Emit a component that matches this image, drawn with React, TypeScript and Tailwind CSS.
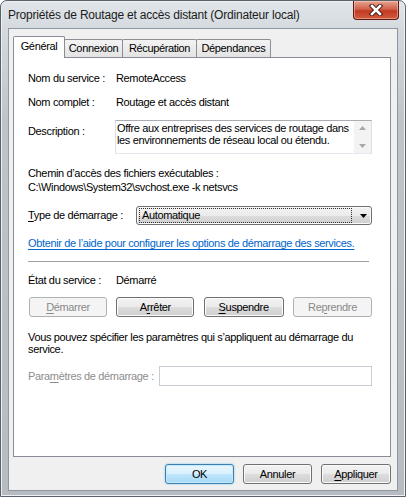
import React from 'react';

// Win7-style button faces
const faceOn =
  'border border-[#707070] rounded-[3px] bg-[linear-gradient(#f2f2f2_0%,#ebebeb_50%,#dddddd_50%,#cfcfcf_100%)] shadow-[inset_0_0_0_1px_#fbfbfb] text-black';
const faceOff = 'border border-[#adb2b5] rounded-[3px] bg-[#f4f4f4] text-[#8a8a8a]';
const faceDefault =
  'border border-[#3c7fb1] rounded-[3px] bg-[linear-gradient(#eaf6fd_0%,#d9f0fc_50%,#bee6fd_50%,#a7d9f5_100%)] shadow-[inset_0_0_0_1px_#c6e9fb,0_0_2px_#6fc0ec] text-black';

function Btn({
  children,
  w,
  kind = 'on',
}: {
  children: React.ReactNode;
  w: string;
  kind?: 'on' | 'off' | 'default';
}) {
  const face = kind === 'on' ? faceOn : kind === 'off' ? faceOff : faceDefault;
  return (
    <div className={`${w} h-[20px] flex items-center justify-center leading-[13px] ${face}`}>
      {children}
    </div>
  );
}

const U = ({ children }: { children: React.ReactNode }) => (
  <span className="underline underline-offset-[2px]">{children}</span>
);

function Tab({ label, w, active }: { label: string; w: string; active?: boolean }) {
  if (active) {
    return (
      <div
        className={`${w} h-[22px] -mb-px relative z-10 bg-white border border-b-0 border-[#898c95] rounded-t-[2px] flex items-start justify-center pt-[3px] leading-[13px]`}
      >
        {label}
      </div>
    );
  }
  return (
    <div
      className={`${w} h-[18px] -ml-px border border-b-0 border-[#8c8e94] rounded-t-[2px] bg-[linear-gradient(#f3f3f3,#e3e3e3)] flex items-start justify-center pt-[2px] leading-[13px]`}
    >
      {label}
    </div>
  );
}

export default function App() {
  return (
    <div className="w-[406px] h-[500px] bg-white font-['Liberation_Sans',Arial,sans-serif] text-[11px] tracking-[-0.35px] text-black">
      {/* window frame */}
      <div className="w-[406px] h-[497px] flex flex-col rounded-t-[7px] border border-[#5b6169] bg-[linear-gradient(#e1e6ea_0px,#d3d9de_30px,#bec4ca_120px,#b6bcc2_100%)] shadow-[inset_0_0_0_1px_#eef1f4]">
        {/* title bar */}
        <div className="h-[27px] flex items-start justify-between">
          <div className="pl-[7px] pt-[7px] text-[12px] leading-[14px] tracking-[-0.2px] text-[#1c1c1c]">
            Propriétés de Routage et accès distant (Ordinateur local)
          </div>
          <div className="mr-[6px] w-[46px] h-[19px] rounded-b-[4px] border border-t-0 border-[#5c1a12] bg-[linear-gradient(#e8a493_0%,#d1614b_45%,#c23a22_55%,#d45a3c_100%)] shadow-[inset_0_0_0_1px_rgba(255,220,210,0.45)] flex items-center justify-center">
            <svg width="16" height="12" viewBox="0 0 16 12">
              <path d="M4 2 L12 10 M12 2 L4 10" stroke="#3b1610" strokeWidth="4.4" strokeLinecap="square" />
              <path d="M4 2 L12 10 M12 2 L4 10" stroke="#ffffff" strokeWidth="2.6" strokeLinecap="square" />
            </svg>
          </div>
        </div>

        {/* client area */}
        <div className="flex-1 mx-[7px] mb-[5px] border border-[#8e969e] bg-[#f0f0f0] flex flex-col pl-[4px] pr-[6px]">
          {/* tabs */}
          <div className="mt-[7px] h-[21px] flex items-end">
            <Tab label="Général" w="w-[52px]" active />
            <Tab label="Connexion" w="w-[59px]" />
            <Tab label="Récupération" w="w-[75px]" />
            <Tab label="Dépendances" w="w-[75px]" />
          </div>

          {/* tab panel */}
          <div className="flex-1 bg-white border border-[#898c95] flex flex-col pl-[14px] pr-[18px]">
            <div className="mt-[14px] flex leading-[13px]">
              <span className="w-[88px]">Nom du service :</span>
              <span>RemoteAccess</span>
            </div>
            <div className="mt-[11px] flex leading-[13px]">
              <span className="w-[88px]">Nom complet :</span>
              <span>Routage et accès distant</span>
            </div>

            <div className="mt-[11px] flex">
              <span className="w-[87px] pt-[5px] leading-[13px]">Description :</span>
              <div className="flex-1 h-[34px] flex border border-[#abadb3] border-x-[#dbdfe6] border-b-[#e3e9ef]">
                <div className="flex-1 pl-[1px] pt-[1px] leading-[12px]">
                  Offre aux entreprises des services de routage dans
                  <br />
                  les environnements de réseau local ou étendu.
                </div>
                <div className="w-[17px] bg-[#f3f3f3] flex flex-col items-center justify-between py-[5px]">
                  <svg width="7" height="4" viewBox="0 0 7 4">
                    <path d="M0 4 L3.5 0 L7 4 Z" fill="#a8a8a8" />
                  </svg>
                  <svg width="7" height="4" viewBox="0 0 7 4">
                    <path d="M0 0 L7 0 L3.5 4 Z" fill="#a8a8a8" />
                  </svg>
                </div>
              </div>
            </div>

            <div className="mt-[12px] leading-[14px]">
              <div>Chemin d’accès des fichiers exécutables :</div>
              <div>C:\Windows\System32\svchost.exe -k netsvcs</div>
            </div>

            <div className="mt-[12px] flex items-center">
              <span className="w-[108px] leading-[13px]">
                <U>T</U>ype de démarrage :
              </span>
              <div className={`flex-1 h-[19px] flex items-center pl-[2px] pr-[4px] ${faceOn}`}>
                <div className="flex-1 h-[15px] border border-dotted border-[#303030] flex items-center pl-[2px] leading-[13px]">
                  Automatique
                </div>
                <svg className="ml-[8px]" width="7" height="4" viewBox="0 0 7 4">
                  <path d="M0 0 L7 0 L3.5 4 Z" fill="#000" />
                </svg>
              </div>
            </div>

            <div className="mt-[12px] leading-[13px] text-[#0066cc] underline underline-offset-[2px]">
              Obtenir de l’aide pour configurer les options de démarrage des services.
            </div>

            <div className="mt-[11px] mr-[3px] h-px bg-[#a0a0a0]" />

            <div className="mt-[12px] flex leading-[13px]">
              <span className="w-[88px]">État du service :</span>
              <span>Démarré</span>
            </div>

            <div className="mt-[10px] pl-px flex justify-between">
              <Btn w="w-[78px]" kind="off">
                <U>D</U>émarrer
              </Btn>
              <Btn w="w-[78px]">
                A<U>r</U>rêter
              </Btn>
              <Btn w="w-[80px]">
                <U>S</U>uspendre
              </Btn>
              <Btn w="w-[79px]" kind="off">
                Re<U>p</U>rendre
              </Btn>
            </div>

            <div className="mt-[14px] leading-[12px]">
              Vous pouvez spécifier les paramètres qui s’appliquent au démarrage du
              <br />
              service.
            </div>

            <div className="mt-[11px] flex items-center">
              <span className="w-[131px] leading-[13px] text-[#8d8d8d]">
                Para<U>m</U>ètres de démarrage :
              </span>
              <div className="flex-1 h-[20px] bg-white border border-[#c9cdd3]" />
            </div>
          </div>

          {/* dialog buttons */}
          <div className="mt-[7px] mb-[6px] flex justify-end gap-[9px]">
            <Btn w="w-[69px]" kind="default">
              OK
            </Btn>
            <Btn w="w-[69px]">Annuler</Btn>
            <Btn w="w-[70px]">
              <U>A</U>ppliquer
            </Btn>
          </div>
        </div>
      </div>
    </div>
  );
}
